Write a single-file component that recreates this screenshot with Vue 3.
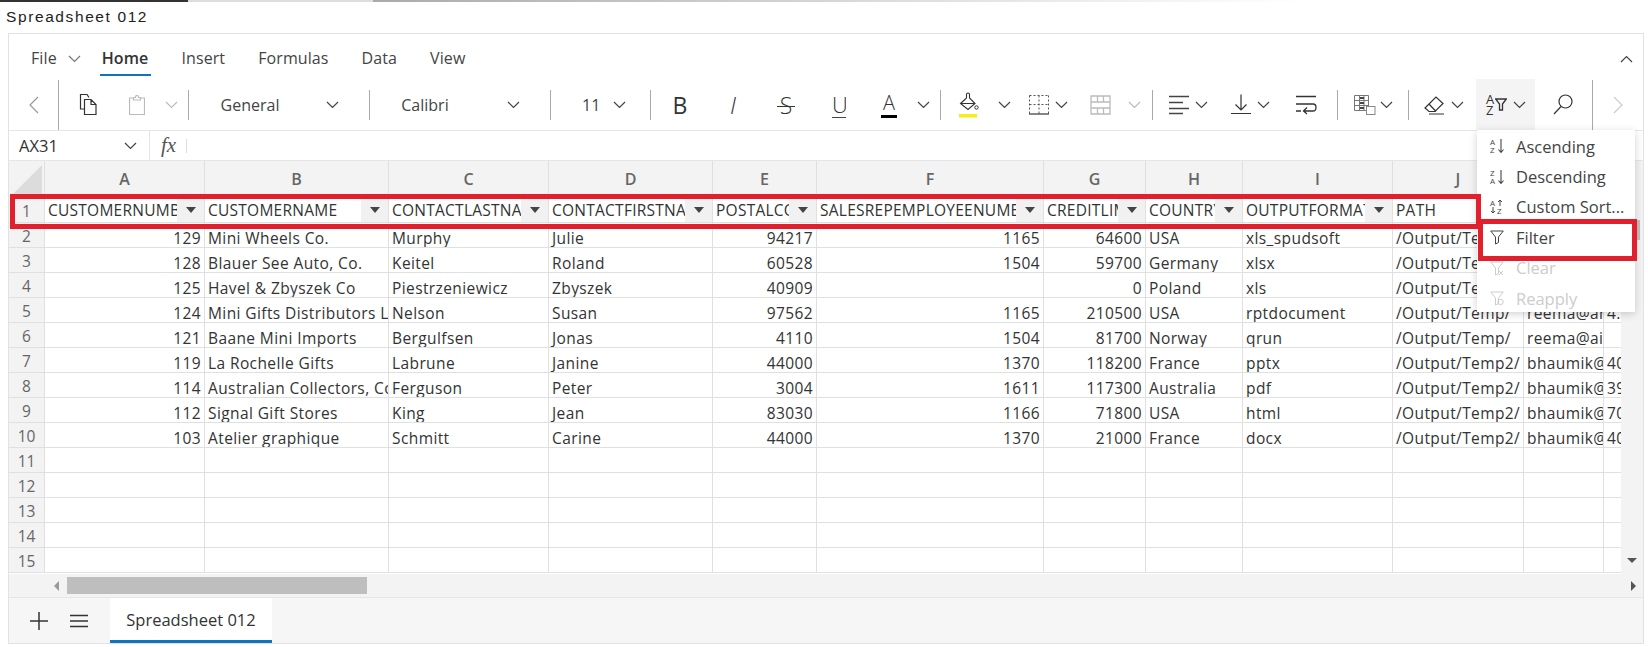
<script setup>
const fileTabs = ["Insert", "Formulas", "Data", "View"]

// centre x of every toolbar item, the margins are worked out from these
const rawTools = [
  { i: "prev", c: 33.5, w: 10, h: 18 },
  { sep: "tall", c: 58 },
  { i: "copy", c: 88, w: 18, h: 21 },
  { i: "paste", c: 136.5, w: 16, h: 20 },
  { i: "chev", c: 171, w: 13, h: 8, off: true },
  { sep: "short", c: 188.5 },
  { text: "General", c: 250, w: 62 },
  { i: "chev", c: 332, w: 13, h: 8 },
  { sep: "short", c: 369.5 },
  { text: "Calibri", c: 425, w: 50 },
  { i: "chev", c: 513, w: 13, h: 8 },
  { sep: "short", c: 550 },
  { text: "11", c: 590, w: 16 },
  { i: "chev", c: 619, w: 13, h: 8 },
  { sep: "short", c: 650.5 },
  { mark: "B", c: 680, w: 20 },
  { mark: "I", c: 733, w: 14 },
  { mark: "S", c: 786, w: 18 },
  { mark: "U", c: 839, w: 14 },
  { mark: "A", c: 889, w: 16 },
  { i: "chev", c: 923.5, w: 13, h: 8 },
  { sep: "short", c: 940.5 },
  { i: "fill", c: 969, w: 20, h: 26 },
  { i: "chev", c: 1004, w: 13, h: 8 },
  { i: "borders", c: 1038.5, w: 20, h: 20 },
  { i: "chev", c: 1061, w: 13, h: 8 },
  { i: "table", c: 1100, w: 21, h: 20, off: true },
  { i: "chev", c: 1134, w: 13, h: 8, off: true },
  { sep: "short", c: 1152.5 },
  { i: "align", c: 1179, w: 21, h: 20 },
  { i: "chev", c: 1201, w: 13, h: 8 },
  { i: "valign", c: 1241, w: 20, h: 21 },
  { i: "chev", c: 1263, w: 13, h: 8 },
  { i: "wrap", c: 1306, w: 22, h: 20 },
  { sep: "short", c: 1337.5 },
  { i: "cond", c: 1365, w: 22, h: 20 },
  { i: "chev", c: 1386, w: 13, h: 8 },
  { sep: "short", c: 1408.5 },
  { i: "eraser", c: 1435, w: 22, h: 20 },
  { i: "chev", c: 1457, w: 13, h: 8 },
  { hl: true, c: 1505.5, w: 59 },
  { i: "search", c: 1563, w: 20, h: 21 },
  { sep: "tall", c: 1592.5 },
  { i: "next", c: 1618, w: 10, h: 18, off: true },
]

let right = 9
const tools = rawTools.map((t) => {
  const w = t.sep ? 1 : t.w
  const left = t.c - w / 2
  const ml = left - right
  right = left + w
  return { ...t, ml }
})

const columns = [
  { name: "A", width: 160, num: true, head: "CUSTOMERNUMBER" },
  { name: "B", width: 184, head: "CUSTOMERNAME" },
  { name: "C", width: 160, head: "CONTACTLASTNAME" },
  { name: "D", width: 164, head: "CONTACTFIRSTNAME" },
  { name: "E", width: 104, num: true, head: "POSTALCODE" },
  { name: "F", width: 227, num: true, head: "SALESREPEMPLOYEENUMBER" },
  { name: "G", width: 102, num: true, head: "CREDITLIMIT" },
  { name: "H", width: 97, head: "COUNTRY" },
  { name: "I", width: 150, head: "OUTPUTFORMAT" },
  { name: "J", width: 131, head: "PATH", plain: true },
  { name: "K", width: 80, head: "", plain: true },
  { name: "L", width: 60, head: "", plain: true },
]

const gridCols = "36px " + columns.map((c) => c.width + "px").join(" ")

const data = [
  ["129", "Mini Wheels Co.", "Murphy", "Julie", "94217", "1165", "64600", "USA", "xls_spudsoft", "/Output/Temp/", "reema@ar4.com", "40"],
  ["128", "Blauer See Auto, Co.", "Keitel", "Roland", "60528", "1504", "59700", "Germany", "xlsx", "/Output/Temp/", "reema@ar4.com", "40"],
  ["125", "Havel & Zbyszek Co", "Piestrzeniewicz", "Zbyszek", "40909", "", "0", "Poland", "xls", "/Output/Temp/", "reema@ar4.com", "40"],
  ["124", "Mini Gifts Distributors Ltd.", "Nelson", "Susan", "97562", "1165", "210500", "USA", "rptdocument", "/Output/Temp/", "reema@ar", "4."],
  ["121", "Baane Mini Imports", "Bergulfsen", "Jonas", "4110", "1504", "81700", "Norway", "qrun", "/Output/Temp/", "reema@ai", ""],
  ["119", "La Rochelle Gifts", "Labrune", "Janine", "44000", "1370", "118200", "France", "pptx", "/Output/Temp2/", "bhaumik@", "40"],
  ["114", "Australian Collectors, Co.", "Ferguson", "Peter", "3004", "1611", "117300", "Australia", "pdf", "/Output/Temp2/", "bhaumik@", "39"],
  ["112", "Signal Gift Stores", "King", "Jean", "83030", "1166", "71800", "USA", "html", "/Output/Temp2/", "bhaumik@", "70"],
  ["103", "Atelier graphique", "Schmitt", "Carine", "44000", "1370", "21000", "France", "docx", "/Output/Temp2/", "bhaumik@", "40"],
]

const rows = []
for (let n = 2; n <= 15; n++) {
  rows.push({ n, cells: data[n - 2] || columns.map(() => "") })
}

const menuItems = [
  { label: "Ascending", sort: ["A", "Z"] },
  { label: "Descending", sort: ["Z", "A"] },
  { label: "Custom Sort...", custom: true },
  { label: "Filter", icon: "funnel" },
  { label: "Clear", icon: "clear", off: true },
  { label: "Reapply", icon: "reapply", off: true },
]
</script>

<template>
  <div class="page">
    <svg class="sprite" aria-hidden="true">
      <symbol id="prev" viewBox="0 0 10 18"><path d="M9 1 1 9l8 8" fill="none" stroke="#999" stroke-width="1.2" /></symbol>
      <symbol id="next" viewBox="0 0 10 18"><path d="m1 1 8 8-8 8" fill="none" stroke="#ccc" stroke-width="1.2" /></symbol>
      <symbol id="chev" viewBox="0 0 13 8"><path d="m1 1 5.5 5.5L12 1" fill="none" stroke="currentColor" stroke-width="1.2" /></symbol>
      <symbol id="copy" viewBox="0 0 18 21">
        <path d="M5.500 15H1.500V.5h6.500l2 3M5.500 5.500h6.500l5 5v10H5.500zM12 5.500v5h5" fill="none" stroke="#333" stroke-width="1.2" />
      </symbol>
      <symbol id="paste" viewBox="0 0 16 20">
        <path d="M4.500 3H.5v16.500h15V3h-4M4.500 5V2.500h2C6.500 1 7 .5 8 .5s1.500.5 1.500 2h2V5z" fill="none" stroke="#bbb" stroke-width="1.200" />
      </symbol>
      <symbol id="fill" viewBox="0 0 20 26">
        <path d="M7.500 6V2.500c0-2 3-2 3 0V6L16 11.500 9 17.500 1.500 11.500 7.500 6M2.500 11.500H16" fill="none" stroke="#333" stroke-width="1.100" />
        <circle cx="17.500" cy="15.500" r="1.700" fill="none" stroke="#333" />
        <rect y="22" width="18" height="3.500" fill="#f4ee1e" />
      </symbol>
      <symbol id="borders" viewBox="0 0 20 20">
        <path d="M.5.5h19M.5 9.500h19M.5.5v18M10 .5v18M19.500.5v18" fill="none" stroke="#555" stroke-width="1" stroke-dasharray="2 2" />
        <path d="M0 19h20" stroke="#333" stroke-width="1.200" />
      </symbol>
      <symbol id="table" viewBox="0 0 21 20">
        <path d="M1 1h19v18H1zM1 7h19M1 13h19M7.500 1v6M13.500 1v6M7.500 13v6M13.500 13v6" fill="none" stroke="#bbb" stroke-width="1.300" />
      </symbol>
      <symbol id="align" viewBox="0 0 21 20">
        <path d="M0 1.500h20M0 7.500h14M0 13.500h20M0 18.500h14" fill="none" stroke="#444" stroke-width="1.300" />
      </symbol>
      <symbol id="valign" viewBox="0 0 20 21">
        <path d="M10 .5v15M4.500 10.500l5.500 5.500 5.500-5.500M0 19.500h20" fill="none" stroke="#333" stroke-width="1.200" />
      </symbol>
      <symbol id="wrap" viewBox="0 0 22 20">
        <path d="M1 1.500h20M1 9h17c4 0 4 7 0 7H9M12 12.500 8.500 16l3.500 3M1 16h5" fill="none" stroke="#333" stroke-width="1.300" />
      </symbol>
      <symbol id="cond" viewBox="0 0 22 20">
        <path d="M.5.500h14v15H.5zM.5 5.500h14M.5 10.500h14M5.500.5v15M10 .5v15" fill="none" stroke="#777" stroke-width="1" />
        <rect x="6" y="2" width="4" height="2" fill="#444" /><rect x="6" y="7" width="4" height="2" fill="#444" /><rect x="6" y="12" width="4" height="2" fill="#444" />
        <rect x="12.500" y="11.500" width="8.500" height="8" fill="#fff" stroke="#888" />
      </symbol>
      <symbol id="eraser" viewBox="0 0 22 20">
        <path d="M1 13 12 2l7 6.500-8 8H5zM5 9l7 7.500M5 19h15" fill="none" stroke="#333" stroke-width="1.200" />
      </symbol>
      <symbol id="search" viewBox="0 0 20 21">
        <circle cx="12.500" cy="7.500" r="6.500" fill="none" stroke="#333" stroke-width="1.200" />
        <path d="M8 12.500 1 20" stroke="#333" stroke-width="1.200" />
      </symbol>
      <symbol id="funnel" viewBox="0 0 14 16">
        <path d="M.7 2h12.600L8.500 8v5.500L5.500 15V8z" fill="none" stroke="#444" stroke-width="1" />
      </symbol>
      <symbol id="clear" viewBox="0 0 14 16">
        <path d="M.7 2h12.600L8.500 8v5.500L5.500 15V8zM9 11l4 4M13 11l-4 4" fill="none" stroke="#ccc" stroke-width="1" />
      </symbol>
      <symbol id="reapply" viewBox="0 0 14 16">
        <path d="M.7 2h12.600L8.500 8v5.500L5.500 15V8z" fill="none" stroke="#ccc" stroke-width="1" />
        <circle cx="10.500" cy="12" r="2.700" fill="none" stroke="#ccc" />
      </symbol>
      <symbol id="down" viewBox="0 0 6 16">
        <path d="M3 1v13M.5 11.500l2.500 3 2.500-3" fill="none" stroke="#444" stroke-width="1.100" />
      </symbol>
      <symbol id="small-up" viewBox="0 0 6 7">
        <path d="M3 7V1M1 3l2-2 2 2" fill="none" stroke="#444" stroke-width="1" />
      </symbol>
      <symbol id="small-down" viewBox="0 0 6 7">
        <path d="M3 0v6M1 4l2 2 2-2" fill="none" stroke="#444" stroke-width="1" />
      </symbol>
    </svg>

    <div class="strip"></div>
    <div class="title">Spreadsheet 012</div>

    <div class="sheet">
      <div class="tabs">
        <span class="tab file">File</span>
        <svg class="chev-file" width="13" height="8"><use href="#chev" /></svg>
        <span class="tab active">Home</span>
        <span v-for="t in fileTabs" :key="t" class="tab">{{ t }}</span>
        <svg class="collapse" width="13" height="8" viewBox="0 0 13 8"><path d="M1 7l5.500-5.500L12 7" fill="none" stroke="#444" stroke-width="1.200" /></svg>
      </div>

      <div class="toolbar">
        <template v-for="(t, idx) in tools" :key="idx">
          <span v-if="t.sep" class="sep" :class="t.sep" :style="{ marginLeft: t.ml + 'px' }"></span>
          <span v-else-if="t.text" class="tool-text" :style="{ marginLeft: t.ml + 'px', width: t.w + 'px' }">{{ t.text }}</span>
          <span v-else-if="t.mark" class="mark" :class="'mark-' + t.mark" :style="{ marginLeft: t.ml + 'px', width: t.w + 'px' }">{{ t.mark }}</span>
          <span v-else-if="t.hl" class="tool-active" :style="{ marginLeft: t.ml + 'px', width: t.w + 'px' }">
            <span class="az"><span>A</span><span>Z</span></span>
            <svg class="az-funnel" width="12" height="13" viewBox="0 0 12 13"><path d="M.7 1h10.600L7.500 6v6h-3V6z" fill="none" stroke="#333" stroke-width="1.300" /></svg>
            <svg class="tool-icon az-chev" width="13" height="8"><use href="#chev" /></svg>
          </span>
          <svg v-else class="tool-icon" :class="{ off: t.off }" :width="t.w" :height="t.h" :style="{ marginLeft: t.ml + 'px' }"><use :href="'#' + t.i" /></svg>
        </template>
      </div>

      <div class="formula">
        <div class="namebox">
          <span>AX31</span>
          <svg width="13" height="8" class="tool-icon"><use href="#chev" /></svg>
        </div>
        <span class="fx">fx</span>
        <span class="fx-sep"></span>
      </div>

      <div class="grid">
        <div class="gridrow head-row" :style="{ gridTemplateColumns: gridCols }">
          <div class="corner"><span class="corner-tri"></span></div>
          <div v-for="c in columns" :key="c.name" class="colhead">{{ c.name }}</div>
        </div>
        <div class="gridrow data-row" :style="{ gridTemplateColumns: gridCols }">
          <div class="rowhead">1</div>
          <div v-for="c in columns" :key="c.name" class="cell filter-cell">
            <span class="filter-text">{{ c.head }}</span>
            <span v-if="!c.plain" class="filter-btn"><i></i></span>
          </div>
        </div>
        <div v-for="r in rows" :key="r.n" class="gridrow data-row" :style="{ gridTemplateColumns: gridCols }">
          <div class="rowhead">{{ r.n }}</div>
          <div v-for="(v, i) in r.cells" :key="i" class="cell" :class="{ num: columns[i].num }">{{ v }}</div>
        </div>
        <div class="vscroll">
          <span class="vthumb"></span>
          <span class="arrow-down"></span>
        </div>
      </div>

      <div class="hscroll">
        <span class="arrow-left"></span>
        <span class="hthumb"></span>
        <span class="arrow-right"></span>
      </div>

      <div class="tabbar">
        <svg width="18" height="18" viewBox="0 0 18 18" class="add"><path d="M9 0v18M0 9h18" stroke="#333" stroke-width="1.500" /></svg>
        <svg width="18" height="14" viewBox="0 0 18 14" class="list"><path d="M0 1.500h18M0 7h18M0 12.500h18" stroke="#333" stroke-width="1.500" /></svg>
        <div class="sheet-tab">Spreadsheet 012</div>
      </div>
    </div>

    <div class="menu">
      <div v-for="m in menuItems" :key="m.label" class="menu-item" :class="{ off: m.off }">
        <span v-if="m.sort" class="sort-icon">
          <span class="sort-letters"><span>{{ m.sort[0] }}</span><span>{{ m.sort[1] }}</span></span>
          <svg width="6" height="16"><use href="#down" /></svg>
        </span>
        <span v-else-if="m.custom" class="sort-icon custom">
          <span>A</span>
          <svg width="6" height="7"><use href="#small-up" /></svg>
          <svg width="6" height="7"><use href="#small-down" /></svg>
          <span>Z</span>
        </span>
        <svg v-else width="14" height="16"><use :href="'#' + m.icon" /></svg>
        <span>{{ m.label }}</span>
      </div>
    </div>

    <div class="red-row"></div>
    <div class="red-filter"></div>
  </div>
</template>

<style>
html,
body {
  margin: 0;
  background: #fff;
}
</style>

<style scoped>
.page {
  position: relative;
  width: 1648px;
  height: 647px;
  overflow: hidden;
  font-family: "Open Sans", "Noto Sans", sans-serif;
  color: #333;
}

.sprite {
  position: absolute;
  width: 0;
  height: 0;
}

.strip {
  height: 2px;
  background: linear-gradient(to right, #333 188px, #ddd 188px, #ddd 373px, #aaa 373px, #ddd 900px, #fff 1300px);
}

.title {
  height: 31px;
  padding-left: 6px;
  font-family: "Liberation Sans", sans-serif;
  font-size: 15.500px;
  line-height: 30px;
  letter-spacing: 1.600px;
  color: #222;
}

.sheet {
  width: 1634px;
  height: 609px;
  margin-left: 8px;
  border: 1px solid #e2e2e2;
  display: flex;
  flex-direction: column;
}

.tabs {
  height: 45px;
  display: flex;
  align-items: center;
  box-sizing: border-box;
  padding: 4px 0 0 22px;
  font-size: 16px;
  letter-spacing: 0.100px;
  color: #444;
  flex-shrink: 0;
}

.tab {
  position: relative;
  margin-right: 33px;
  line-height: 41px;
}

.tab.file {
  margin-right: 11px;
}

.chev-file {
  margin-right: 21px;
  color: #777;
}

.tab.active {
  color: #333;
  font-weight: 600;
}

.tab.active::after {
  content: "";
  position: absolute;
  left: -2px;
  right: -3px;
  bottom: 3px;
  height: 2px;
  background: #0f74bd;
}

.collapse {
  margin-left: auto;
  margin-right: 10px;
}

.toolbar {
  height: 52px;
  flex-shrink: 0;
  display: flex;
  align-items: center;
  border-bottom: 1px solid #e6e6e6;
  box-sizing: border-box;
  color: #444;
  font-size: 16px;
}

.tool-icon {
  flex-shrink: 0;
  color: #444;
}

.tool-icon.off {
  color: #bbb;
}

.sep {
  width: 1px;
  flex-shrink: 0;
  background: #aaa;
}

.sep.tall {
  height: 50px;
}

.sep.short {
  height: 30px;
}

.tool-text {
  flex-shrink: 0;
  text-align: center;
  white-space: nowrap;
}

.mark {
  flex-shrink: 0;
  text-align: center;
  line-height: 30px;
  height: 30px;
  box-sizing: border-box;
  color: #333;
}

.mark-B {
  font-size: 23px;
}

.mark-I {
  font-size: 24px;
  font-style: italic;
  font-weight: 300;
}

.mark-S {
  font-size: 23px;
  font-weight: 300;
  background: linear-gradient(#333, #333) center 16px / 100% 1px no-repeat;
}

.mark-U {
  font-size: 22px;
  font-weight: 300;
  height: 26px;
  line-height: 24px;
  border-bottom: 1px solid #444;
  overflow: hidden;
}

.mark-A {
  font-size: 20px;
  font-weight: 300;
  height: 27px;
  line-height: 24px;
  border-bottom: 3px solid #000;
}

.tool-active {
  flex-shrink: 0;
  align-self: flex-start;
  height: 51px;
  background: #f4f4f4;
  display: flex;
  align-items: center;
  padding-left: 10px;
  box-sizing: border-box;
}

.az {
  display: flex;
  flex-direction: column;
  font-size: 13px;
  line-height: 11px;
  color: #333;
}

.az-funnel {
  margin-left: 1px;
}

.az-chev {
  margin-left: 6px;
}

.formula {
  height: 30px;
  flex-shrink: 0;
  display: flex;
  align-items: center;
  border-bottom: 1px solid #e6e6e6;
  box-sizing: border-box;
}

.namebox {
  width: 141px;
  height: 100%;
  box-sizing: border-box;
  padding: 0 12px 0 10px;
  display: flex;
  align-items: center;
  justify-content: space-between;
  border-right: 1px solid #e6e6e6;
  font-size: 16.500px;
}

.fx {
  margin-left: 11px;
  font-family: "Liberation Serif", serif;
  font-style: italic;
  font-size: 21px;
  color: #555;
}

.fx-sep {
  width: 1px;
  height: 14px;
  margin-left: 10px;
  background: #ddd;
}

.grid {
  position: relative;
  height: 413px;
  flex-shrink: 0;
  overflow: hidden;
}

.gridrow {
  display: grid;
  width: 1612px;
  overflow: hidden;
}

.head-row {
  height: 37px;
  grid-template-rows: 37px;
}

.data-row {
  height: 25px;
  grid-template-rows: 25px;
}

.corner,
.colhead,
.rowhead {
  background: #f3f3f3;
  color: #666;
  box-sizing: border-box;
}

.corner {
  position: relative;
  border-right: 1px solid #e0e0e0;
}

.corner-tri {
  position: absolute;
  right: 2px;
  bottom: 1px;
  width: 0;
  height: 0;
  border-style: solid;
  border-width: 0 0 32px 32px;
  border-color: transparent transparent #dcdcdc transparent;
}

.colhead {
  display: flex;
  align-items: center;
  justify-content: center;
  font-size: 16px;
  font-weight: 600;
  border-right: 1px solid #e0e0e0;
  border-bottom: 1px solid #e0e0e0;
}

.rowhead {
  text-align: center;
  font-size: 15.500px;
  line-height: 26px;
  border-right: 1px solid #e0e0e0;
  border-bottom: 1px solid #e0e0e0;
  overflow: hidden;
}

.cell {
  box-sizing: border-box;
  min-width: 0;
  padding: 0 3px;
  font-size: 15.500px;
  letter-spacing: 0.400px;
  line-height: 30px;
  color: #333;
  white-space: nowrap;
  overflow: hidden;
  border-right: 1px solid #e0e0e0;
  border-bottom: 1px solid #e0e0e0;
}

.cell.num {
  text-align: right;
}

.filter-cell {
  display: flex;
  padding-right: 0;
  line-height: 25px;
  letter-spacing: 0.250px;
}

.filter-text {
  flex: 1;
  min-width: 0;
  overflow: hidden;
}

.filter-btn {
  width: 27px;
  flex-shrink: 0;
  background: #f1f1f1;
  display: flex;
  align-items: center;
  justify-content: center;
}

.filter-btn i {
  width: 0;
  height: 0;
  border-style: solid;
  border-width: 6px 5px 0 5px;
  border-color: #444 transparent transparent transparent;
}

.vscroll {
  position: absolute;
  top: 0;
  right: 0;
  width: 22px;
  height: 100%;
  background: #f3f3f3;
}

.vthumb {
  position: absolute;
  top: 59px;
  left: 2px;
  width: 17px;
  height: 20px;
  background: #bebebe;
}

.arrow-down {
  position: absolute;
  left: 6px;
  bottom: 11px;
  width: 0;
  height: 0;
  border-style: solid;
  border-width: 5px 5px 0 5px;
  border-color: #555 transparent transparent transparent;
}

.hscroll {
  height: 24px;
  flex-shrink: 0;
  background: #f3f3f3;
  display: flex;
  align-items: center;
  padding-left: 45px;
  border-bottom: 1px solid #e6e6e6;
  box-sizing: border-box;
}

.arrow-left {
  width: 0;
  height: 0;
  border-style: solid;
  border-width: 5px 5px 5px 0;
  border-color: transparent #999 transparent transparent;
}

.hthumb {
  width: 300px;
  height: 17px;
  margin-left: 8px;
  background: #bebebe;
}

.arrow-right {
  width: 0;
  height: 0;
  margin-left: auto;
  margin-right: 7px;
  border-style: solid;
  border-width: 5px 0 5px 5px;
  border-color: transparent transparent transparent #555;
}

.tabbar {
  flex: 1;
  min-height: 0;
  display: flex;
  align-items: center;
  background: #f6f6f6;
}

.add {
  margin-left: 21px;
}

.list {
  margin-left: 22px;
}

.sheet-tab {
  width: 162px;
  height: 100%;
  margin-left: 22px;
  box-sizing: border-box;
  background: #fff;
  border-bottom: 3px solid #0f74bd;
  text-align: center;
  font-size: 16.500px;
  line-height: 44px;
  color: #333;
}

.menu {
  position: absolute;
  left: 1477px;
  top: 130px;
  width: 158px;
  height: 182px;
  padding: 1px 0;
  box-sizing: border-box;
  background: #fff;
  box-shadow: 0 2px 8px rgba(0, 0, 0, 0.18);
}

.menu-item {
  height: 30.400px;
  display: flex;
  align-items: center;
  gap: 12px;
  padding-left: 13px;
  font-size: 16.500px;
  color: #444;
}

.menu-item.off {
  color: #ccc;
}

.sort-icon {
  width: 14px;
  height: 16px;
  display: flex;
  justify-content: space-between;
  font-size: 8px;
  line-height: 8px;
  color: #444;
}

.sort-letters {
  display: flex;
  flex-direction: column;
}

.sort-icon.custom {
  display: grid;
  grid-template-columns: 7px 7px;
  grid-template-rows: 8px 8px;
}

.red-row {
  position: absolute;
  left: 10px;
  top: 194px;
  width: 1471px;
  height: 35px;
  box-sizing: border-box;
  border: 5px solid #e21f2d;
}

.red-filter {
  position: absolute;
  left: 1478px;
  top: 219px;
  width: 159px;
  height: 42px;
  box-sizing: border-box;
  border: 5px solid #e21f2d;
}
</style>
